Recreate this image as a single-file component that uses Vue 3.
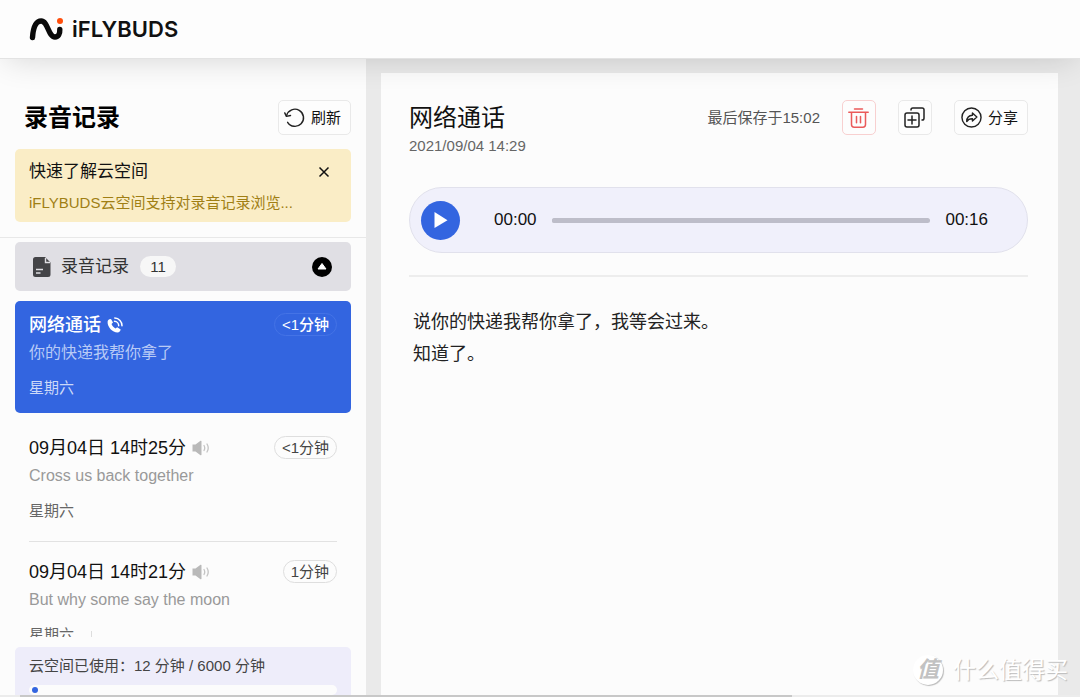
<script setup>
import { ref } from 'vue'

const noticeOpen = ref(true)
const groupOpen = ref(true)
const selected = ref(0)
const position = ref(0)

const records = [
  { title: '网络通话', kind: 'call', length: '<1分钟', text: '你的快递我帮你拿了', day: '星期六' },
  { title: '09月04日 14时25分', kind: 'sound', length: '<1分钟', text: 'Cross us back together', day: '星期六' },
  { title: '09月04日 14时21分', kind: 'sound', length: '1分钟', text: 'But why some say the moon', day: '星期六', more: true },
]
const lines = ['说你的快递我帮你拿了，我等会过来。', '知道了。']
</script>

<template>
  <div class="app">
    <header class="topbar">
      <svg class="mark" width="35" height="24" viewBox="0 0 35 24" aria-hidden="true">
        <path d="M3.500 20.500C4.300 9.500 7.500 4 12.200 4C19 4 19.200 20 26 20c3.400 0 5-3 4.800-7.500" fill="none" stroke="#0a0a0a" stroke-width="5.400" stroke-linecap="round" />
        <circle cx="31" cy="4" r="3.500" fill="#fdfdfd" />
        <circle cx="31" cy="4" r="3" fill="#ff4e0b" />
      </svg>
      <span class="brand">iFLYBUDS</span>
    </header>

    <div class="body">
      <aside class="side">
        <div class="side-head">
          <h1>录音记录</h1>
          <button class="btn" type="button">
            <svg width="21" height="21" viewBox="0 0 22 22" fill="none" stroke="#222" stroke-width="1.500" stroke-linecap="round" stroke-linejoin="round" aria-hidden="true">
              <path d="M2.800 8.800A9 9 0 1 1 3.800 16" />
              <path d="M.8 6.200l1.700 3.600 4.300-.9" />
            </svg>
            <span>刷新</span>
          </button>
        </div>

        <section v-if="noticeOpen" class="notice">
          <div class="notice-head">
            <strong>快速了解云空间</strong>
            <button class="bare" type="button" aria-label="关闭" @click="noticeOpen = false">
              <svg width="12" height="12" viewBox="0 0 12 12" stroke="#111" stroke-width="1.500" aria-hidden="true"><path d="M1.500 1.500l9 9M10.500 1.500l-9 9" /></svg>
            </button>
          </div>
          <p>iFLYBUDS云空间支持对录音记录浏览...</p>
        </section>

        <div class="rule"></div>

        <button class="group" type="button" :aria-expanded="groupOpen" @click="groupOpen = !groupOpen">
          <svg width="18" height="20" viewBox="0 0 18 20" aria-hidden="true">
            <path d="M2.500 0H12l5.500 5.500v12A2.500 2.500 0 0 1 15 20H2.500A2.500 2.500 0 0 1 0 17.500v-15A2.500 2.500 0 0 1 2.500 0z" fill="#444447" />
            <path d="M12.500 1v4.500H17M3 12.500h7M3 16h4.500" fill="none" stroke="#e0dfe4" stroke-width="1.400" />
          </svg>
          <span class="group-name">录音记录</span>
          <span class="count">11</span>
          <svg class="arrow" width="20" height="20" viewBox="0 0 20 20" aria-hidden="true">
            <circle cx="10" cy="10" r="10" fill="#000" />
            <path d="M10 6.500l4 5.500H6z" fill="#fff" stroke="#fff" stroke-linejoin="round" />
          </svg>
        </button>

        <ul class="list">
          <li v-for="(r, i) in records" v-show="groupOpen" :key="i" class="item" :class="{ on: i === selected }" @click="selected = i">
            <div class="item-in">
              <div class="item-head">
                <span class="item-title">{{ r.title }}</span>
                <svg v-if="r.kind === 'call'" width="16" height="16" viewBox="0 0 16 16" aria-hidden="true">
                  <path d="M2.300 2.300L4 1.900l2 3.700-1.500 1.500c.6 1.900 2.100 3.500 4 4.400l1.700-1.300 3.500 2.300c-.2 1.600-1.400 2.800-3.200 2.900C5.500 15.400.4 10 .6 4.900c.1-1.200.7-2.200 1.700-2.600z" fill="#fff" />
                  <path d="M7.500 4.300a4.400 4.400 0 0 1 4.200 4.500M7.800 1.100a7.500 7.500 0 0 1 7.200 7.700" fill="none" stroke="#fff" stroke-width="1.500" stroke-linecap="round" />
                </svg>
                <svg v-else width="18" height="16" viewBox="0 0 18 16" aria-hidden="true">
                  <path d="M.5 4.500h3L8.500.8q1-.5 1 .6v13.200q0 1.100-1 .6L3.500 11.500h-3z" fill="#b9b9b9" />
                  <path d="M12 5.500q1.500 2.500 0 5M15 4q2.500 4 0 8" fill="none" stroke="#c4c4c4" stroke-width="1.300" stroke-linecap="round" />
                </svg>
                <span class="pill">{{ r.length }}</span>
              </div>
              <p class="item-text">{{ r.text }}</p>
              <p class="item-day">{{ r.day }}<i v-if="r.more" class="sep"></i></p>
            </div>
          </li>
        </ul>

        <footer class="quota">
          <label id="used-label">云空间已使用：12 分钟 / 6000 分钟</label>
          <div class="track" role="progressbar" aria-labelledby="used-label" aria-valuemin="0" aria-valuemax="6000" aria-valuenow="12"><i></i></div>
        </footer>
      </aside>

      <main class="card">
        <div class="card-head">
          <div class="heading">
            <h2>网络通话</h2>
            <time>2021/09/04 14:29</time>
          </div>
          <div class="actions">
            <span class="saved">最后保存于15:02</span>
            <button class="btn square danger" type="button" aria-label="删除">
              <svg width="21" height="20" viewBox="0 0 21 20" fill="none" stroke="#ea5a5a" stroke-width="1.500" stroke-linecap="round" aria-hidden="true">
                <path d="M.8 4.200h19.400M6.500 1h8M3.500 4.200v12.300a2.700 2.700 0 0 0 2.700 2.700h8.600a2.700 2.700 0 0 0 2.700-2.700V4.200M8.500 8.500v6.300M12.500 8.500v6.300" />
              </svg>
            </button>
            <button class="btn square" type="button" aria-label="复制">
              <svg width="21" height="21" viewBox="0 0 21 21" fill="none" stroke="#222" stroke-width="1.500" stroke-linecap="round" aria-hidden="true">
                <rect x="1" y="6" width="14" height="14" rx="2" />
                <path d="M7 3V2.800A1.800 1.800 0 0 1 8.800 1h9.400A1.800 1.800 0 0 1 20 2.800v8.400a1.800 1.800 0 0 1-1.800 1.800H18M8 9v8M4 13h8" />
              </svg>
            </button>
            <button class="btn share" type="button">
              <svg width="21" height="21" viewBox="0 0 22 22" fill="none" stroke="#222" stroke-width="1.500" stroke-linejoin="round" aria-hidden="true">
                <circle cx="11" cy="11" r="10" />
                <path d="M12 6.300l4.600 4.200-4.600 4.200v-2.300c-2.800-.1-4.600.7-6 2.800.1-4 2.300-6.300 6-6.500z" />
              </svg>
              <span>分享</span>
            </button>
          </div>
        </div>

        <div class="player">
          <button class="play" type="button" aria-label="播放">
            <svg width="14" height="16" viewBox="0 0 14 16" aria-hidden="true"><path d="M.5 0L13.500 8.200.5 16z" fill="#fff" /></svg>
          </button>
          <span>00:00</span>
          <input v-model="position" type="range" min="0" max="16" aria-label="播放进度" />
          <span>00:16</span>
        </div>

        <div class="transcript">
          <p v-for="line in lines" :key="line">{{ line }}</p>
        </div>
      </main>
    </div>

    <div class="scroll"><i></i></div>
    <div class="stamp"><b>值</b><span>什么值得买</span></div>
  </div>
</template>

<style>
body {
  margin: 0;
}
</style>

<style scoped>
* {
  box-sizing: border-box;
}
.app {
  position: relative;
  display: flex;
  flex-direction: column;
  height: 100vh;
  overflow: hidden;
  background: #eaeaea;
  color: #111;
  font: 15px/22px "Liberation Sans", "Noto Sans CJK SC", sans-serif;
}
h1, h2, p, ul {
  margin: 0;
  padding: 0;
}
button {
  margin: 0;
  font: inherit;
  color: inherit;
  cursor: pointer;
}
svg {
  display: block;
  flex: none;
}
.topbar {
  position: relative;
  z-index: 1;
  display: flex;
  align-items: center;
  gap: 8px;
  flex: none;
  height: 59px;
  padding-left: 29px;
  background: #fdfdfd;
  border-bottom: 1px solid #e3e3e3;
  box-shadow: 0 6px 32px -6px rgba(0, 0, 0, 0.16);
}
.brand {
  font: 600 22px/28px Inter, sans-serif;
}
.body {
  display: flex;
  flex: 1;
  min-height: 0;
}
.side {
  display: flex;
  flex-direction: column;
  flex: none;
  width: 366px;
  background: #fcfcfc;
}
.side-head {
  display: flex;
  align-items: center;
  justify-content: space-between;
  margin: 41px 15px 14px 24px;
}
h1 {
  font-size: 24px;
  line-height: 34px;
  font-weight: 700;
  color: #000;
}
.btn {
  display: flex;
  align-items: center;
  justify-content: center;
  gap: 6px;
  height: 35px;
  padding: 0 9px 0 5px;
  background: #fdfdfd;
  border: 1px solid #e9e9e9;
  border-radius: 5px;
}
.square {
  width: 34px;
  padding: 0;
}
.danger {
  border-color: #f8d0d0;
}
.share {
  padding-left: 6px;
}
.notice {
  margin: 0 15px 15px;
  padding: 11px 14px 8px;
  background: #faedc6;
  border-radius: 5px;
}
.notice-head {
  display: flex;
  align-items: center;
  justify-content: space-between;
  height: 24px;
  margin-bottom: 8px;
}
.notice strong {
  font-size: 17px;
  font-weight: 400;
}
.notice p {
  color: #a07f14;
}
.bare {
  padding: 0;
  margin-right: 7px;
  border: 0;
  background: none;
}
.rule {
  flex: none;
  height: 1px;
  background: #e8e8e8;
}
.group {
  display: flex;
  align-items: center;
  flex: none;
  height: 49px;
  margin: 4px 15px 10px;
  padding: 0 19px 0 18px;
  background: #e0dfe4;
  border: 0;
  border-radius: 5px;
}
.group-name {
  margin-left: 10px;
  font-size: 17px;
  color: #333;
}
.count {
  width: 36px;
  margin-left: 11px;
  border-radius: 11px;
  background: #f7f7f7;
  line-height: 21px;
  text-align: center;
  color: #333;
}
.arrow {
  margin-left: auto;
}
.list {
  flex: 1;
  min-height: 0;
  margin-bottom: 10px;
  overflow: hidden;
  list-style: none;
}
.item {
  margin: 0 15px;
  padding: 0 14px;
  border-radius: 5px;
  cursor: pointer;
}
.item-in {
  padding: 12px 0 19px;
  border-bottom: 1px solid #e2e2e2;
}
.item + .item {
  margin-top: 6px;
}
.item.on {
  background: #3365e0;
  color: #fff;
}
.item.on .item-in {
  padding-bottom: 14px;
  border: 0;
}
.item.on + .item {
  margin-top: 11px;
}
.item-head {
  display: flex;
  align-items: center;
  gap: 6px;
  height: 23px;
}
.item-title {
  font-size: 18px;
}
.on .item-title,
.on .pill {
  font-weight: 500;
}
.pill {
  margin-left: auto;
  padding: 0 7px;
  border: 1px solid #dedede;
  border-radius: 12px;
  line-height: 21px;
  color: #444;
}
.on .pill {
  color: #fff;
  border-color: #4473e6;
}
.item-text {
  margin: 5px 0 12px;
  font-size: 16px;
  line-height: 24px;
  color: #999;
}
.on .item-text {
  color: #b8caf6;
}
.item-day {
  display: flex;
  color: #666;
}
.on .item-day {
  color: #ccd9f8;
}
.sep {
  width: 1px;
  margin: 7px 0 0 17px;
  background: #ddd;
}
.quota {
  flex: none;
  height: 48px;
  margin: 0 15px;
  padding: 8px 14px 0;
  background: #eeedfa;
  border-radius: 5px 5px 0 0;
  color: #444;
}
.quota label {
  display: block;
}
.track {
  display: flex;
  align-items: center;
  height: 10px;
  margin-top: 8px;
  padding-left: 3px;
  border-radius: 5px;
  background: #fcfcfc;
}
.track i {
  width: 6px;
  height: 6px;
  border-radius: 50%;
  background: #3365e0;
}
.card {
  flex: 1;
  min-width: 0;
  margin: 14px 22px 0 15px;
  padding: 27px 30px 0 28px;
  background: #fcfcfc;
}
.card-head {
  display: flex;
  align-items: flex-start;
  justify-content: space-between;
}
h2 {
  font-size: 24px;
  line-height: 36px;
  font-weight: 400;
}
time {
  display: block;
  line-height: 20px;
  color: #666;
}
.actions {
  display: flex;
  align-items: center;
  gap: 22px;
}
.saved {
  color: #555;
}
.player {
  display: flex;
  align-items: center;
  height: 66px;
  margin-top: 31px;
  padding: 0 39px 0 11px;
  background: #f0f0fb;
  border: 1px solid #e1e1ec;
  border-radius: 33px;
  font-size: 17px;
}
.play {
  display: flex;
  align-items: center;
  justify-content: center;
  width: 39px;
  height: 39px;
  margin-right: 34px;
  padding: 0 0 0 1px;
  border: 0;
  border-radius: 50%;
  background: #3365e0;
}
.player input {
  flex: 1;
  min-width: 0;
  height: 5px;
  margin: 0 15px;
  appearance: none;
  background: #bdbdc9;
  border-radius: 3px;
}
.player input::-webkit-slider-thumb {
  appearance: none;
  width: 5px;
  height: 5px;
  border-radius: 50%;
  background: #bdbdc9;
}
.transcript {
  margin-top: 22px;
  padding: 29px 4px;
  border-top: 2px solid #ededed;
  font-size: 18px;
  line-height: 32px;
  color: #222;
}
.scroll {
  flex: none;
  height: 2px;
  padding: 0 288px 0 20px;
  background: #ececec;
}
.scroll i {
  display: block;
  height: 2px;
  background: #c8c8c8;
}
.stamp {
  position: absolute;
  right: 12px;
  bottom: 9px;
  z-index: 2;
  display: flex;
  align-items: center;
  gap: 10px;
  font-size: 23px;
  line-height: 36px;
  color: #fff;
  text-shadow: 1px 1px 1px #bbb;
}
.stamp b {
  width: 30px;
  height: 30px;
  border-radius: 50%;
  background: #fff;
  box-shadow: 1px 1px 1px #bbb;
  color: #c2c2c2;
  font-size: 22px;
  line-height: 30px;
  text-align: center;
  text-shadow: none;
  font-style: italic;
}
</style>
